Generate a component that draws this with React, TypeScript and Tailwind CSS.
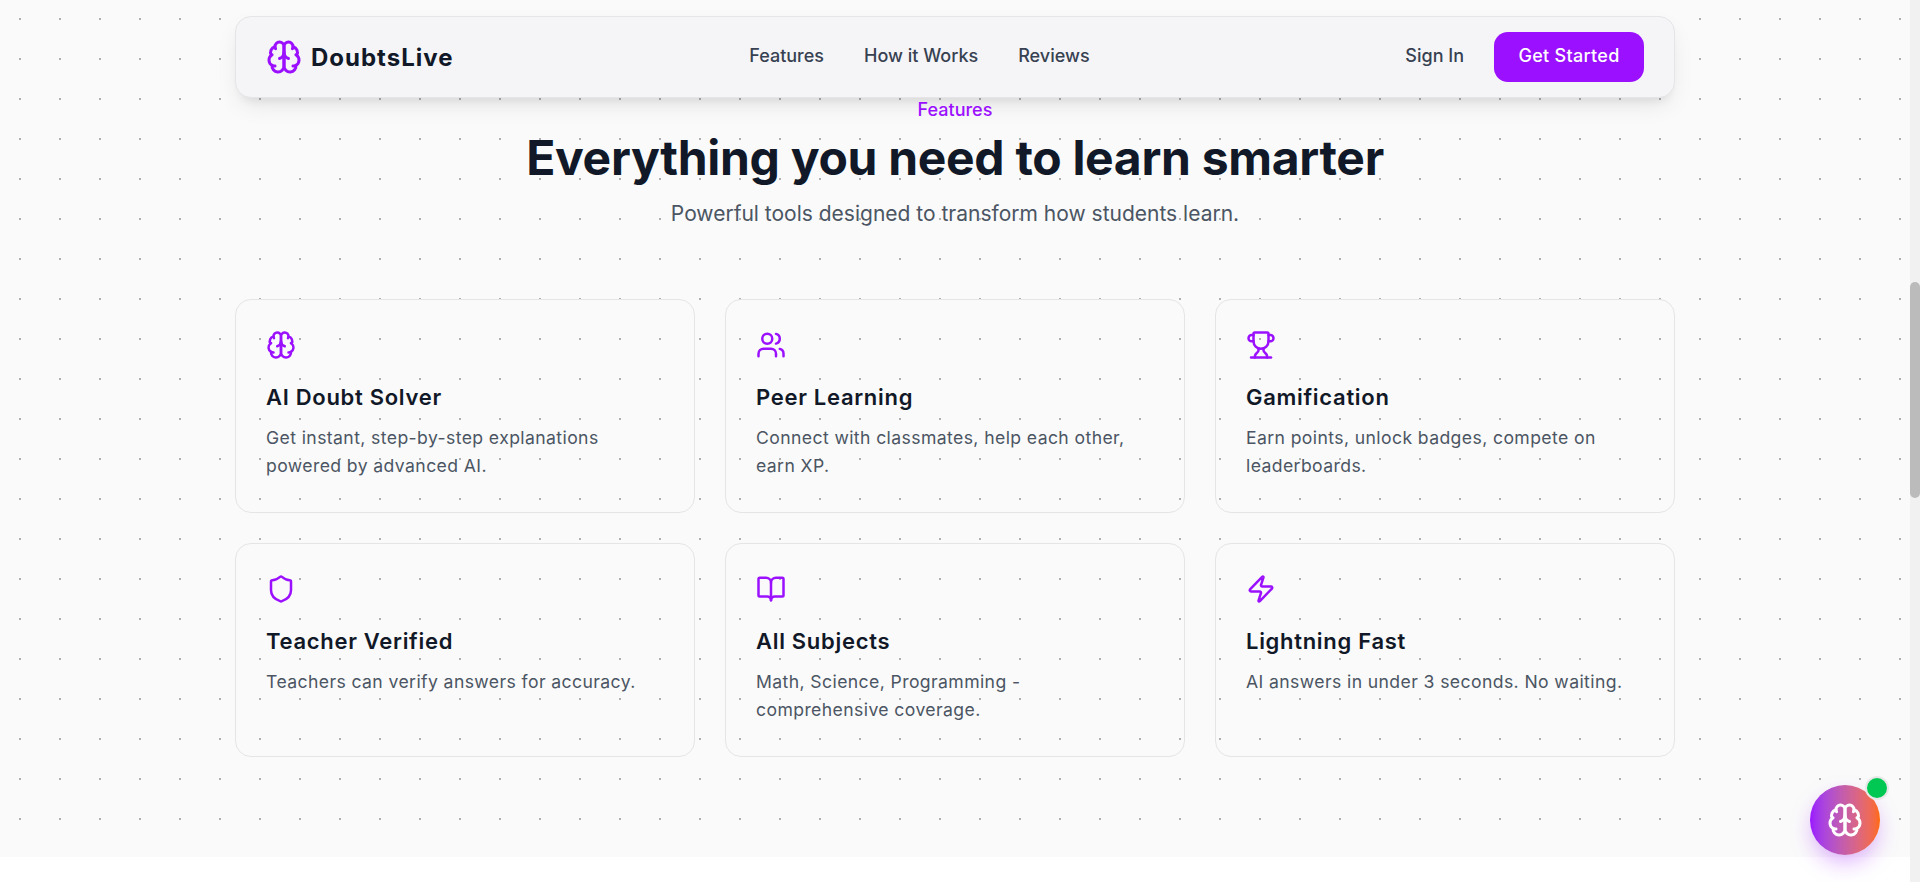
import { Users, Trophy, Shield, BookOpen, Zap } from 'lucide-react';

function BrainIcon({ className }: { className?: string }) {
  return (
    <svg viewBox="0 0 24 24" fill="none" stroke="currentColor" strokeWidth={2} strokeLinecap="round" strokeLinejoin="round" className={className}>
      <path d="M12 5a3 3 0 1 0-5.997.125 4 4 0 0 0-2.526 5.77 4 4 0 0 0 .556 6.588A4 4 0 1 0 12 18Z" />
      <path d="M12 5a3 3 0 1 1 5.997.125 4 4 0 0 1 2.526 5.77 4 4 0 0 1-.556 6.588A4 4 0 1 1 12 18Z" />
      <path d="M15 13a4.5 4.5 0 0 1-3-4 4.5 4.5 0 0 1-3 4" />
      <path d="M17.599 6.5a3 3 0 0 0 .399-1.375" />
      <path d="M6.003 5.125A3 3 0 0 0 6.401 6.5" />
      <path d="M3.477 10.896a4 4 0 0 1 .585-.396" />
      <path d="M19.938 10.5a4 4 0 0 1 .585.396" />
      <path d="M6 18a4 4 0 0 1-1.967-.516" />
      <path d="M19.967 17.484A4 4 0 0 1 18 18" />
    </svg>
  );
}

const features = [
  { icon: BrainIcon, title: 'AI Doubt Solver', text: 'Get instant, step-by-step explanations powered by advanced AI.' },
  { icon: Users, title: 'Peer Learning', text: 'Connect with classmates, help each other, earn XP.' },
  { icon: Trophy, title: 'Gamification', text: 'Earn points, unlock badges, compete on leaderboards.' },
  { icon: Shield, title: 'Teacher Verified', text: 'Teachers can verify answers for accuracy.' },
  { icon: BookOpen, title: 'All Subjects', text: 'Math, Science, Programming - comprehensive coverage.' },
  { icon: Zap, title: 'Lightning Fast', text: 'AI answers in under 3 seconds. No waiting.' },
];

function Navbar() {
  return (
    <nav className="mx-auto flex h-[82px] w-[1440px] items-center justify-between rounded-2xl border border-[#e5e5e8] bg-[#f5f5f7] pl-[30px] pr-[30px] shadow-[0_10px_25px_-5px_rgba(0,0,0,0.1),0_8px_10px_-6px_rgba(0,0,0,0.08)]">
      <div className="flex items-center gap-[9px]">
        <BrainIcon className="h-9 w-9 text-[#9b10ff]" />
        <span className="pt-[2px] text-2xl font-bold tracking-[1px] text-[#111827]">DoubtsLive</span>
      </div>
      <div className="mr-5 flex items-center gap-10 pb-[2px] text-lg font-medium text-[#374151]">
        <a>Features</a>
        <a>How it Works</a>
        <a>Reviews</a>
      </div>
      <div className="flex items-center gap-[30px] text-lg font-medium">
        <a className="pb-[2px] text-[#374151]">Sign In</a>
        <button className="h-[50px] w-[150px] rounded-[14px] bg-[#9b10ff] pb-[2px] tracking-[0.3px] text-white">Get Started</button>
      </div>
    </nav>
  );
}

function FeatureCard({ icon: Icon, title, text }: (typeof features)[number]) {
  return (
    <div className="h-[214px] rounded-2xl border border-[#e5e5e5] px-[30px] pt-[30px]">
      <Icon className="h-[30px] w-[30px] text-[#9b10ff]" />
      <h3 className="mt-[21px] text-[22px] font-semibold leading-[32px] tracking-[0.7px] text-[#111827]">{title}</h3>
      <p className="mt-[11px] text-[17.6px] leading-7 tracking-[0.4px] text-[#4b5563]">{text}</p>
    </div>
  );
}

export default function App() {
  return (
    <div className="flex h-[882px] overflow-hidden bg-white font-['Inter',sans-serif]">
      <div className="relative flex-1">
        <main className="h-[857px] bg-[#fafafa] bg-[radial-gradient(circle,#b0b0b0_1px,transparent_1px)] bg-[size:40px_40px] bg-[position:0_-1px] pt-4">
          <Navbar />
          <header className="text-center">
            <p className="text-lg font-medium leading-6 text-[#9b10ff]">Features</p>
            <h1 className="mt-[6px] text-5xl font-bold leading-[60px] tracking-[-0.3px] text-[#111827]">Everything you need to learn smarter</h1>
            <p className="mt-3 text-[21px] leading-7 text-[#4b5563]">Powerful tools designed to transform how students learn.</p>
          </header>
          <section className="mx-auto mt-[71px] grid w-[1440px] grid-cols-3 gap-[30px]">
            {features.map((f) => (
              <FeatureCard key={f.title} {...f} />
            ))}
          </section>
        </main>
        <button className="absolute left-[1810px] top-[785px] flex h-[70px] w-[70px] items-center justify-center rounded-full bg-gradient-to-r from-[#9b10ff] to-[#ff6a00] shadow-[0_10px_25px_-5px_rgba(155,16,255,0.4)]">
          <BrainIcon className="h-9 w-9 text-white" />
          <span className="absolute -right-[9px] -top-[9px] h-6 w-6 rounded-full border-2 border-[#e8e8e8] bg-[#00c853]" />
        </button>
      </div>
      <div className="w-[10px] bg-[#f1f1f1] pt-[282px]">
        <div className="h-[216px] rounded-full bg-[#bbbbbb]" />
      </div>
    </div>
  );
}
